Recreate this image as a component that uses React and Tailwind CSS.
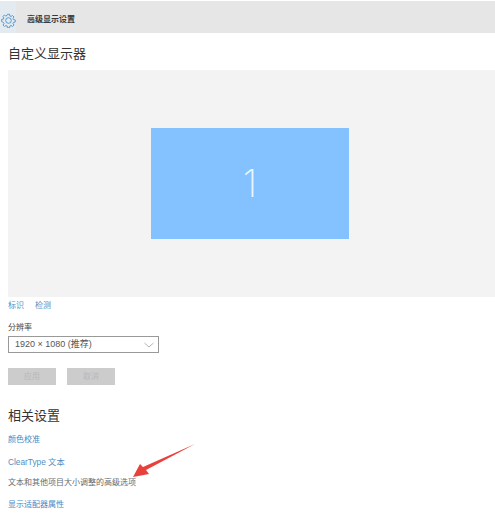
import React from "react";

function Gear() {
  return (
    <svg width="15" height="15" viewBox="0 0 24 24" fill="none" stroke="#5b9bd0" strokeWidth="1.6" strokeLinejoin="round">
      <path d="M10.3 2h3.4l.5 2.8 1.9.8 2.3-1.6 2.4 2.4-1.6 2.3.8 1.9 2.8.5v3.4l-2.8.5-.8 1.9 1.6 2.3-2.4 2.4-2.3-1.6-1.9.8-.5 2.8h-3.4l-.5-2.8-1.9-.8-2.3 1.6-2.4-2.4 1.6-2.3-.8-1.9L1 13.7v-3.4l2.8-.5.8-1.9L3 5.6l2.4-2.4 2.3 1.6 1.9-.8z" />
      <circle cx="12" cy="12" r="4.5" />
    </svg>
  );
}

export default function App() {
  return (
    <div className="relative w-[495px] h-[514px] overflow-hidden bg-white font-['Liberation_Sans','Noto_Sans_CJK_SC',sans-serif] text-[#333]">
      <header className="h-[32px] mt-px bg-[#e6e6e6] flex items-center">
        <div className="w-[16px] h-[32px] bg-[#e3eaf0] flex items-center justify-center pt-[6px]">
          <Gear />
        </div>
        <span className="ml-[11px] pt-[6px] text-[8px] leading-none font-bold text-[#3a3a3a]">高级显示设置</span>
      </header>

      <div className="pl-2">
        <h1 className="mt-[11px] h-[26px] text-[13px] leading-[20px] text-[#333]">自定义显示器</h1>
        <div className="h-[227px] bg-[#f3f3f3] flex items-center justify-center">
          <div className="w-[198px] h-[111px] -ml-[3px] bg-[#83c1ff] flex items-center justify-center text-[38px] font-['Inter'] font-extralight text-[#eaf5ff]">
            1
          </div>
        </div>
        <div className="mt-[2px] h-[13px] flex gap-[11px] text-[8px] leading-[13px] text-[#4f8fc6]">
          <span>标识</span>
          <span>检测</span>
        </div>
        <div className="mt-[10px] text-[8px] leading-[12px] text-[#444]">分辨率</div>
        <div className="mt-[2px] w-[151px] h-[17px] border border-[#999] flex items-center justify-between pl-[6px] pr-[2px] text-[9px] text-[#555]">
          <span>1920 × 1080 (推荐)</span>
          <svg width="12" height="8" viewBox="0 0 12 8" fill="none" stroke="#aaa" strokeWidth="0.9" className="mr-[1px]">
            <path d="M1.5 2l4.5 4 4.5-4" />
          </svg>
        </div>
        <div className="mt-[15px] flex gap-[11px]">
          <div className="w-[48px] h-[17px] bg-[#cccccc] flex items-center justify-center text-[8px] text-[#b8b8b8]">应用</div>
          <div className="w-[48px] h-[17px] bg-[#cccccc] flex items-center justify-center text-[8px] text-[#b8b8b8]">取消</div>
        </div>
        <h2 className="mt-[21px] h-[20px] text-[13px] leading-[20px] text-[#333]">相关设置</h2>
        <div className="mt-[8px] h-[22px] text-[8px] leading-[12px] text-[#4089c8]">颜色校准</div>
        <div className="h-[21px] text-[8.3px] leading-[12px] text-[#4f8fc6]">ClearType 文本</div>
        <div className="h-[22px] text-[8px] leading-[12px] text-[#6a6a6a]">文本和其他项目大小调整的高级选项</div>
        <div className="text-[8px] leading-[12px] text-[#4089c8]">显示适配器属性</div>
      </div>

      <svg className="absolute left-[130px] top-[441px]" width="68" height="38" viewBox="0 0 68 38">
        <path d="M65 3 L16 29 L19 33 L3 36 L10 23 L13 26 Z" fill="#e8413c" />
      </svg>
    </div>
  );
}
